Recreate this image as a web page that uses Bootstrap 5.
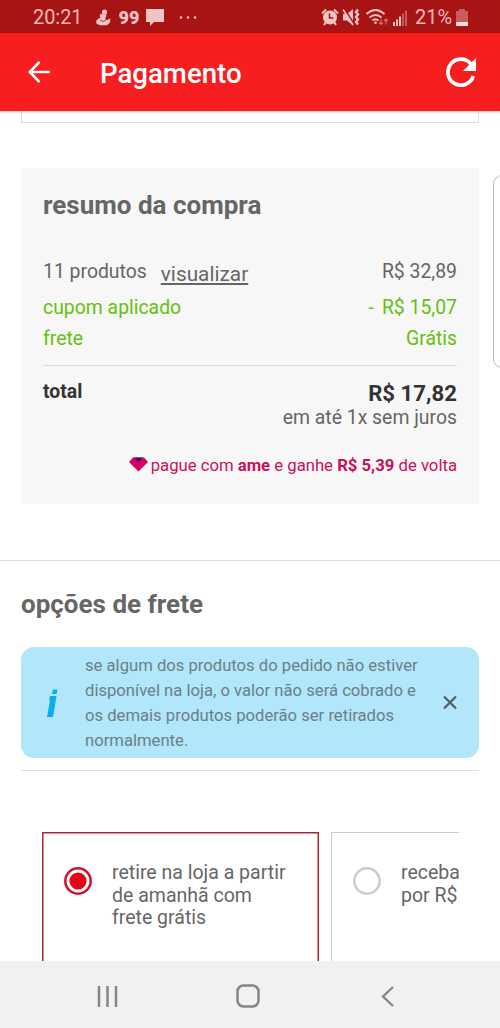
<!DOCTYPE html>
<html lang="pt-BR">
<head>
    <meta charset="UTF-8">
    <meta name="viewport" content="width=device-width, initial-scale=1.0">
    <title>Pagamento</title>
    <link href="https://cdn.jsdelivr.net/npm/bootstrap@5.3.3/dist/css/bootstrap.min.css" rel="stylesheet">
    <style>
        body { font-family: Roboto, "Liberation Sans", sans-serif; font-size: 19.4px; line-height: 30px; color: #666; background: #fff; }
        svg { display: block; flex-shrink: 0; }
        .screen { width: 500px; height: 1028px; }
        .status-bar { height: 33px; padding: 2px 32px 0 33px; background: #a81414; color: #f0b9b9; line-height: 31px; }
        .status-time { font-size: 19.9px; }
        .status-person { margin: 0 8px 0 13px; }
        .status-bubble { margin: 0 14px 0 7px; }
        .status-battery { margin-left: 4px; }
        .status-99 { font-weight: 900; font-size: 18px; color: #f0c4c4; }
        .app-bar { height: 78px; padding: 0 24px 0 28px; background: #f61e1f; color: #fff; box-shadow: 0 1px 2px rgba(0, 0, 0, .25); z-index: 1; }
        .app-title { margin-left: 50px; padding-top: 3px; font-size: 27.6px; font-weight: 500; }
        .page-body { padding: 0 21px; }
        .field-end { height: 12px; border: 1px solid #ddd; border-top: 0; }
        .summary { height: 336px; margin-top: 45px; padding: 21px 22px 0; background: #f7f7f7; }
        .heading { font-size: 26px; font-weight: 700; line-height: 32px; color: #666; }
        .see-items { margin-left: 14px; padding-top: 2px; font-size: 20.8px; color: #666; text-underline-offset: 2px; text-decoration-thickness: 1.5px; }
        .green { color: #66c010; }
        .row-products { margin-top: 36px; height: 36px; }
        .row-freight { padding-top: 1px; }
        .total-line { margin-top: 11px; padding-top: 11px; border-top: 1px solid #d9d9d9; color: #333; }
        .total-value { font-size: 22.2px; font-weight: 700; line-height: 36px; margin-top: -2px; }
        .installments { line-height: 24px; margin-top: -5px; color: #666; }
        .ame { margin-top: 21px; font-size: 16.7px; color: #c8105f; }
        .ame svg { margin: 0 3px 3px 0; }
        .section-line { margin: 56px -21px 0; border-top: 1px solid #ddd; }
        .freight-title { margin-top: 27px; }
        .notice { height: 111px; margin-top: 27px; padding: 6px 22px 0 25px; border-radius: 13px; background: #b2e6fa; }
        .notice-text { width: 345px; margin-left: 25px; font-size: 16.65px; line-height: 25px; color: #6b7f88; }
        .notice-end { height: 13px; border-bottom: 1px solid #ddd; }
        .options { margin: 61px 20px 0 21px; gap: 12px; }
        .option { width: 277px; padding: 28px 19px 0 21px; border: 1px solid #ccc; line-height: 22.6px; }
        .option.chosen { border-color: #a92339; box-shadow: inset 0 0 0 .5px #a92339; }
        .option-text { margin-left: 20px; padding-top: 1px; font-size: 19.5px; }
        .drawer { right: -12px; top: 64px; width: 19px; height: 193px; border: 1px solid #bbb; border-radius: 9px; background: #fff; }
        .nav-keys { height: 67px; background: #f1f1f1; padding: 3px 106px 0 97px; }
        .home-key { margin-right: 4px; }
    </style>
</head>
<body>
    <div class="screen d-flex flex-column overflow-hidden">
        <div class="status-bar d-flex align-items-center flex-shrink-0">
            <span class="status-time">20:21</span>
            <!-- Notificações -->
            <svg class="status-person" width="15" height="17" viewBox="0 0 15 17" fill="#f0c4c4"><circle cx="8.500" cy="3" r="2.600"/><path d="M4.500 5l6 .5-.5 2.500-1 1.500 1.500 1.500 2-.5 2-1-.5 4-3 2.700H4L.5 14.800l-.3-3L2.500 9.500l2-.5-1-2z"/><path d="M4 11q3 3 6 0" fill="none" stroke="#a81414" stroke-width=".8"/></svg>
            <span class="status-99">99</span>
            <svg class="status-bubble" width="18" height="17" viewBox="0 0 18 17" fill="#f0c4c4"><path d="M0 0h18v13H8l-4 4v-4H0z"/></svg>
            <svg width="20" height="5" viewBox="0 0 20 5" fill="#f0b9b9"><circle cx="3" cy="2.500" r="1.300"/><circle cx="10" cy="2.500" r="1.300"/><circle cx="17" cy="2.500" r="1.300"/></svg>
            <!-- Alarme, vibração, wi-fi e sinal -->
            <svg class="ms-auto" width="94" height="20" viewBox="0 0 94 20" fill="none" stroke="#f0c4c4">
                <circle cx="9" cy="9.500" r="7" fill="#f0c4c4" stroke="none"/>
                <path d="M1 5.500l4-4M17 5.500l-4-4M4.500 14.500l-1.500 2.500M13.500 14.500l1.500 2.500" stroke-width="2"/>
                <path d="M8.500 5.500v4.500h4" stroke="#a81414" stroke-width="1.500"/>
                <path d="M22 6h4l6-5v16.500l-6-5h-4z" fill="#f0c4c4" stroke="none"/>
                <path d="M23.500 1l9 14" stroke="#a81414" stroke-width="1.500"/>
                <path d="M22 1.500l10 15.500" stroke-width="1.600"/>
                <path d="M37 1.500l-2 2.500 2 2.500-2 2.500 2 2.500-2 2.500 2 2.500" stroke-width="2.400"/>
                <path d="M45.500 6q9-8 18 0M48.500 9.500q6-5 12 0M51.500 12.500q3-2.500 6 0" stroke-width="1.900"/>
                <circle cx="54.500" cy="14.800" r="1.300" fill="#f0c4c4" stroke="none"/>
                <path d="M60 11v5.500M58 14.500l2 2 2-2M65 16.500V11M63 13l2-2 2 2" stroke="#ce6d6d" stroke-width="1.200"/>
                <path d="M73 18v-4M76 18v-6.500M79 18V8.500" stroke-width="2"/>
                <path d="M82 18V5.500M85 18V2.500" stroke="#c45c5c" stroke-width="2"/>
            </svg>
            <span class="status-time">21%</span>
            <svg class="status-battery" width="12" height="17" viewBox="0 0 12 17"><path d="M3 0h6v2h3v11H0V2h3z" fill="#c95d5d"/><path d="M0 13h12v4H0z" fill="#f8dada"/></svg>
        </div>

        <div class="app-bar d-flex align-items-center flex-shrink-0 position-relative">
            <svg width="22" height="22" viewBox="0 0 22 22" fill="none" stroke="#fff" stroke-width="2.600"><path d="M11.500 1L1.700 11l9.800 10M2 11h20"/></svg>
            <span class="app-title">Pagamento</span>
            <svg class="ms-auto" width="30" height="30" viewBox="0 0 30 30"><path d="M25 7A13 13 0 1 0 27.300 19" fill="none" stroke="#fff" stroke-width="3.700"/><path d="M30 1v13H17z" fill="#fff"/></svg>
        </div>

        <div class="page-body flex-fill overflow-hidden position-relative">
            <div class="field-end"></div>

            <div class="summary">
                <h2 class="heading mb-0">resumo da compra</h2>
                <div class="row-products d-flex">
                    <span>11 produtos</span>
                    <a href="#" class="see-items">visualizar</a>
                    <span class="ms-auto">R$ 32,89</span>
                </div>
                <div class="green d-flex justify-content-between"><span>cupom aplicado</span><span><span class="me-2">-</span>R$ 15,07</span></div>
                <div class="row-freight green d-flex justify-content-between"><span>frete</span><span>Grátis</span></div>
                <div class="total-line d-flex justify-content-between">
                    <b>total</b>
                    <div class="text-end">
                        <div class="total-value">R$ 17,82</div>
                        <div class="installments">em até 1x sem juros</div>
                    </div>
                </div>
                <div class="ame d-flex align-items-center justify-content-end">
                    <svg width="19" height="15" viewBox="0 0 19 15"><path d="M4 .5h11L19 5 9.500 14.500 0 5z" fill="#d4005f"/><path d="M5.500 .5h8L11 4H8z" fill="#33196b"/></svg>
                    <span>pague com <b>ame</b> e ganhe <b>R$ 5,39</b> de volta</span>
                </div>
            </div>

            <div class="section-line"></div>
            <h2 class="heading freight-title mb-0">opções de frete</h2>

            <div class="notice d-flex">
                <svg class="align-self-center" width="14" height="36" viewBox="0 0 14 36" fill="#0badee"><path d="M7 1.500h4.500l-1 4.500H6zM4 8h6.500L7 29H1L4 12.500H3z"/></svg>
                <div class="notice-text">se algum dos produtos do pedido não estiver<br>disponível na loja, o valor não será cobrado e<br>os demais produtos poderão ser retirados<br>normalmente.</div>
                <svg class="ms-auto" width="14" height="100" viewBox="0 0 14 100" stroke="#555f64" stroke-width="2.300"><path d="M1 43.500l12 12M13 43.500L1 55.500"/></svg>
            </div>
            <div class="notice-end"></div>

            <div class="options d-flex overflow-hidden">
                <div class="option chosen d-flex flex-shrink-0">
                    <svg width="28" height="42" viewBox="0 0 28 42"><circle cx="14" cy="20" r="12.700" fill="#fff" stroke="#c9142b" stroke-width="2.500"/><circle cx="14" cy="20" r="8.600" fill="#e9001c"/></svg>
                    <div class="option-text">retire na loja a partir<br>de amanhã com<br>frete grátis<br><br><br><br></div>
                </div>
                <div class="option d-flex flex-shrink-0">
                    <svg width="28" height="42" viewBox="0 0 28 42"><circle cx="14" cy="20" r="12.700" fill="#fff" stroke="#ccc" stroke-width="2.500"/></svg>
                    <div class="option-text text-nowrap">receba<br>por R$<br><br><br><br><br></div>
                </div>
            </div>

            <div class="drawer position-absolute"></div>
        </div>

        <div class="nav-keys d-flex align-items-center justify-content-between flex-shrink-0">
            <svg width="21" height="21" viewBox="0 0 21 21" stroke="#858585" stroke-width="2.500"><path d="M2 0v21M10.500 0v21M19 0v21"/></svg>
            <svg class="home-key" width="24" height="24" viewBox="0 0 24 24" fill="none" stroke="#858585" stroke-width="2.500"><rect x="1.500" y="1.500" width="21" height="21" rx="6"/></svg>
            <svg width="13" height="21" viewBox="0 0 13 21" fill="none" stroke="#858585" stroke-width="2.300"><path d="M12 1L2 10.500 12 20"/></svg>
        </div>
    </div>
    <script src="https://cdn.jsdelivr.net/npm/bootstrap@5.3.3/dist/js/bootstrap.bundle.min.js"></script>
</body>
</html>
